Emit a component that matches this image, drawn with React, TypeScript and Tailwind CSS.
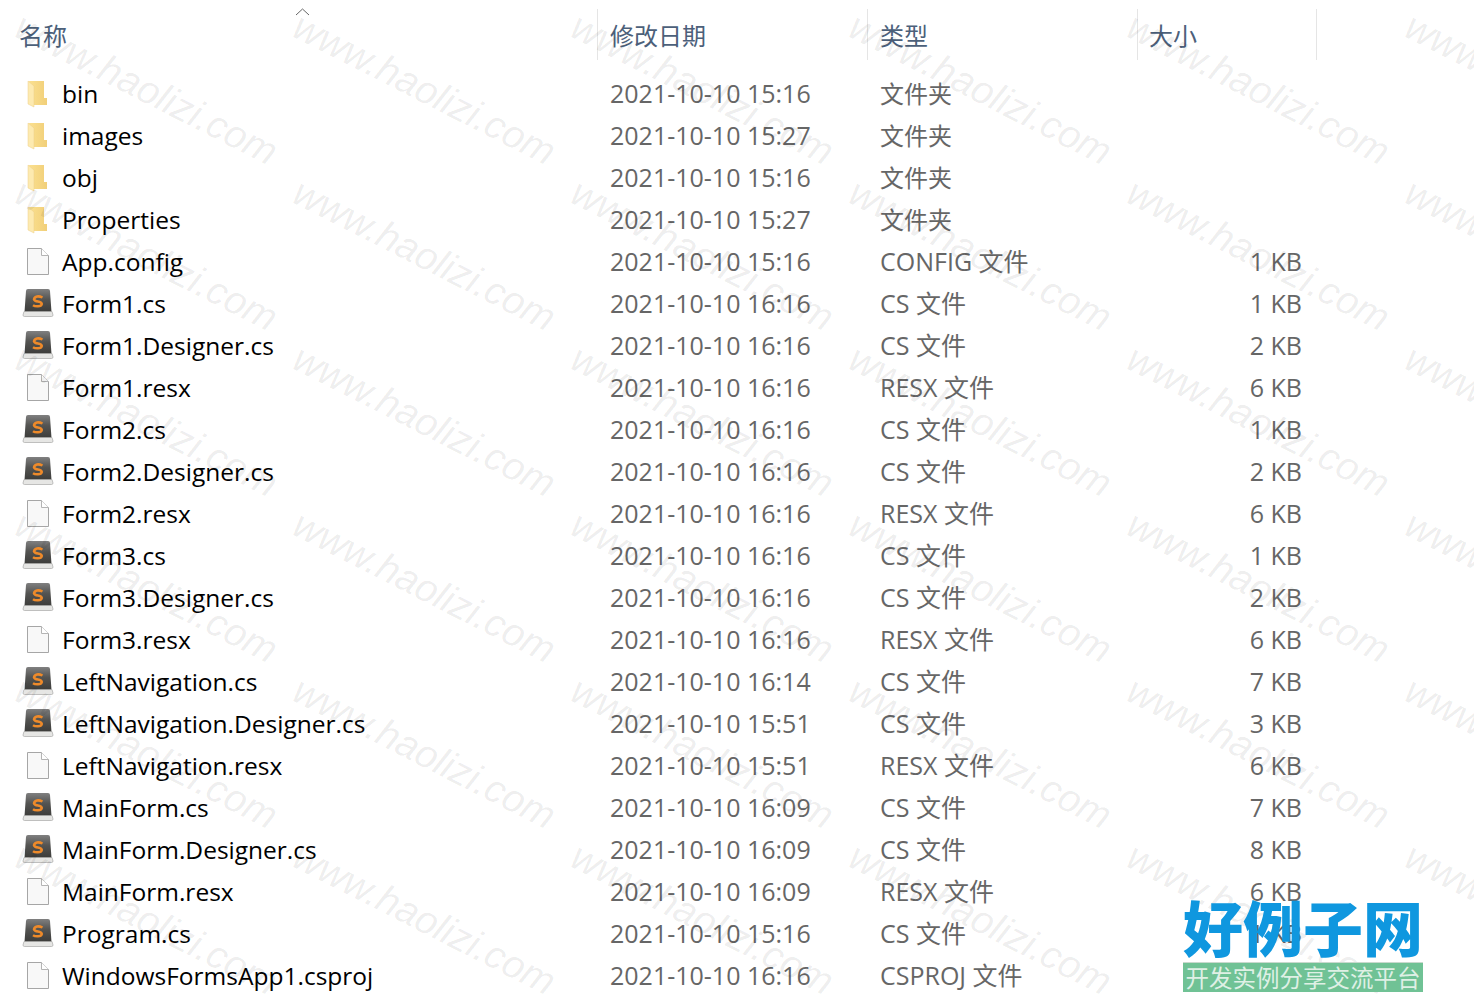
const FONT = "font-['Open_Sans','Noto_Sans_CJK_SC',sans-serif]";

type Row = { name: string; date: string; type: string; size?: string; icon: "folder" | "file" | "cs" };

const rows: Row[] = [
  { name: "bin", date: "2021-10-10 15:16", type: "文件夹", icon: "folder" },
  { name: "images", date: "2021-10-10 15:27", type: "文件夹", icon: "folder" },
  { name: "obj", date: "2021-10-10 15:16", type: "文件夹", icon: "folder" },
  { name: "Properties", date: "2021-10-10 15:27", type: "文件夹", icon: "folder" },
  { name: "App.config", date: "2021-10-10 15:16", type: "CONFIG 文件", size: "1 KB", icon: "file" },
  { name: "Form1.cs", date: "2021-10-10 16:16", type: "CS 文件", size: "1 KB", icon: "cs" },
  { name: "Form1.Designer.cs", date: "2021-10-10 16:16", type: "CS 文件", size: "2 KB", icon: "cs" },
  { name: "Form1.resx", date: "2021-10-10 16:16", type: "RESX 文件", size: "6 KB", icon: "file" },
  { name: "Form2.cs", date: "2021-10-10 16:16", type: "CS 文件", size: "1 KB", icon: "cs" },
  { name: "Form2.Designer.cs", date: "2021-10-10 16:16", type: "CS 文件", size: "2 KB", icon: "cs" },
  { name: "Form2.resx", date: "2021-10-10 16:16", type: "RESX 文件", size: "6 KB", icon: "file" },
  { name: "Form3.cs", date: "2021-10-10 16:16", type: "CS 文件", size: "1 KB", icon: "cs" },
  { name: "Form3.Designer.cs", date: "2021-10-10 16:16", type: "CS 文件", size: "2 KB", icon: "cs" },
  { name: "Form3.resx", date: "2021-10-10 16:16", type: "RESX 文件", size: "6 KB", icon: "file" },
  { name: "LeftNavigation.cs", date: "2021-10-10 16:14", type: "CS 文件", size: "7 KB", icon: "cs" },
  { name: "LeftNavigation.Designer.cs", date: "2021-10-10 15:51", type: "CS 文件", size: "3 KB", icon: "cs" },
  { name: "LeftNavigation.resx", date: "2021-10-10 15:51", type: "RESX 文件", size: "6 KB", icon: "file" },
  { name: "MainForm.cs", date: "2021-10-10 16:09", type: "CS 文件", size: "7 KB", icon: "cs" },
  { name: "MainForm.Designer.cs", date: "2021-10-10 16:09", type: "CS 文件", size: "8 KB", icon: "cs" },
  { name: "MainForm.resx", date: "2021-10-10 16:09", type: "RESX 文件", size: "6 KB", icon: "file" },
  { name: "Program.cs", date: "2021-10-10 15:16", type: "CS 文件", size: "1 KB", icon: "cs" },
  { name: "WindowsFormsApp1.csproj", date: "2021-10-10 16:16", type: "CSPROJ 文件", size: "1 KB", icon: "file" },
];

function FolderIcon() {
  return (
    <svg width="32" height="30" viewBox="0 0 32 30">
      <defs>
        <linearGradient id="folderBack" x1="0" y1="0" x2="1" y2="0">
          <stop offset="0" stopColor="#fbe08f" />
          <stop offset="1" stopColor="#f1cf79" />
        </linearGradient>
      </defs>
      <path d="M7 2h15v17h3v7H12z" fill="url(#folderBack)" />
      <path d="M6 2l6 5v21l-6-3z" fill="#fdeab0" stroke="#eccf88" strokeWidth="0.5" />
    </svg>
  );
}

function FileIcon() {
  return (
    <svg width="32" height="30" viewBox="0 0 32 30">
      <path d="M5.500 1.500h14l7 7v19h-21z" fill="#f8f8f8" stroke="#a6a6a6" />
      <path d="M19.500 1.500v7h7" fill="#fff" stroke="#b4b4b4" />
    </svg>
  );
}

function SublimeIcon() {
  return (
    <svg width="32" height="30" viewBox="0 0 32 30">
      <defs>
        <linearGradient id="sublimeBody" x1="0" y1="0" x2="0" y2="1">
          <stop offset="0" stopColor="#808080" />
          <stop offset="0.45" stopColor="#545452" />
          <stop offset="1" stopColor="#3c3c3a" />
        </linearGradient>
      </defs>
      <path d="M4 2q0-2 2-2h20q2 0 2 2l1.500 21h-27z" fill="url(#sublimeBody)" />
      <path d="M2 22.500h28l1 3.500q0 1.500-1.500 1.500h-27q-1.500 0-1.500-1.500z" fill="#e6e6e4" stroke="#a9a9a7" strokeWidth="0.7" />
      <path d="M20.500 8.500q-3-1.500-5.500-1t-3 2.800q.5 1.700 4 2.200t3.800 2.500q-.5 2.200-3.800 2.300t-5-1.100" fill="none" stroke="#ee8a2a" strokeWidth="2.500" />
    </svg>
  );
}

function FileGlyph({ kind }: { kind: Row["icon"] }) {
  if (kind === "folder") return <FolderIcon />;
  if (kind === "cs") return <SublimeIcon />;
  return <FileIcon />;
}

function Watermarks() {
  return (
    <div className="absolute inset-0 overflow-hidden pointer-events-none">
      <div className="grid w-max -ml-[263px] -mt-[76px] grid-cols-[repeat(7,278px)] auto-rows-[166px]">
        {Array.from({ length: 49 }).map((_, i) => (
          <div key={i} className="relative h-[166px] w-[278px]">
            <span className="absolute left-[13px] top-[80px] origin-top-left rotate-[27deg] whitespace-nowrap font-['Liberation_Sans',sans-serif] text-[39px] italic leading-[44px] text-black/[0.075]">
              www.haolizi.com
            </span>
          </div>
        ))}
      </div>
    </div>
  );
}

function Logo() {
  return (
    <div className="absolute left-[1183px] top-[890px] w-[240px] font-['Noto_Sans_CJK_SC',sans-serif]">
      <div className="h-[72px] whitespace-nowrap text-[60px] leading-[72px] font-black text-[#0f97df]">好例子网</div>
      <div className="h-[30px] whitespace-nowrap border-t border-[#c9d9cd] bg-[#70c295] text-center text-[23.500px] leading-[28px] text-[#dff0e5]">
        开发实例分享交流平台
      </div>
    </div>
  );
}

export default function App() {
  return (
    <div className={`relative h-[1002px] w-[1474px] overflow-hidden bg-white ${FONT}`}>
      {/* header */}
      <div className="grid h-[60px] grid-cols-[597px_270px_270px_180px] pt-[9px] text-[24px] text-[#4c607a]">
        <div className="relative flex h-[51px] items-center pl-[19px] pt-[2px]">
          名称
          <svg className="absolute left-[295px] top-[-1px]" width="15" height="8" viewBox="0 0 15 8">
            <path d="M1 7l6.500-6L14 7" fill="none" stroke="#666" strokeWidth="1" />
          </svg>
        </div>
        <div className="flex h-[51px] items-center border-l border-[#e5e5e5] pl-[12px] pt-[2px]">修改日期</div>
        <div className="flex h-[51px] items-center border-l border-[#e5e5e5] pl-[12px] pt-[2px]">类型</div>
        <div className="flex h-[51px] items-center border-x border-[#e5e5e5] pl-[11px] pt-[2px]">大小</div>
      </div>

      {/* rows */}
      <div className="flex flex-col pt-[13px] text-[25px]">
        {rows.map((r) => (
          <div key={r.name} className="grid h-[42px] grid-cols-[597px_270px_270px_165px] items-center leading-[40px]">
            <div className="flex items-center pl-[22px] text-black">
              <span className="flex w-[40px] shrink-0">
                <FileGlyph kind={r.icon} />
              </span>
              <span className="whitespace-nowrap text-[24.500px]">{r.name}</span>
            </div>
            <div className="whitespace-nowrap pb-[2px] pl-[13px] text-[#666]">{r.date}</div>
            <div className={`whitespace-nowrap pl-[13px] text-[#666] ${r.icon === "folder" ? "text-[24px]" : "pb-[2px]"}`}>{r.type}</div>
            <div className="whitespace-nowrap pb-[2px] text-right text-[#666]">{r.size}</div>
          </div>
        ))}
      </div>

      <Watermarks />
      <Logo />
    </div>
  );
}
